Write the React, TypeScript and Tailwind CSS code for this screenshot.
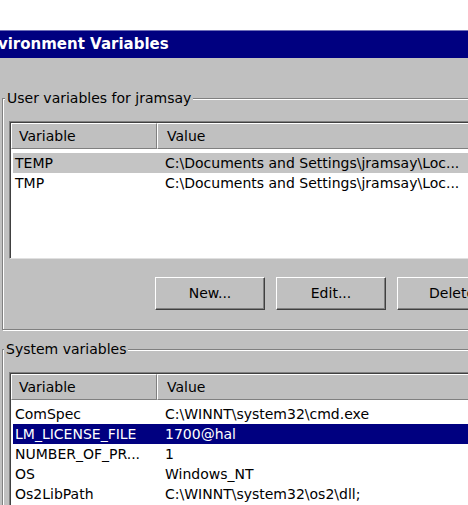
const userVars = [
  { name: "TEMP", value: "C:\\Documents and Settings\\jramsay\\Loc..." },
  { name: "TMP", value: "C:\\Documents and Settings\\jramsay\\Loc..." },
];

const systemVars = [
  { name: "ComSpec", value: "C:\\WINNT\\system32\\cmd.exe" },
  { name: "LM_LICENSE_FILE", value: "1700@hal" },
  { name: "NUMBER_OF_PR...", value: "1" },
  { name: "OS", value: "Windows_NT" },
  { name: "Os2LibPath", value: "C:\\WINNT\\system32\\os2\\dll;" },
];

type Row = { name: string; value: string };

const VarList = ({ rows, selected, active, height }: { rows: Row[]; selected: number; active: boolean; height: string }) => {
  return (
    <div className={"ml-[6px] w-[560px] bg-white border border-t-[#808080] border-l-[#808080] border-r-white border-b-[#e0e0e0] shadow-[inset_1px_1px_0_#404040] " + height}>
      <div className="flex h-[26px] mt-[1px] ml-[1px] bg-[#c0c0c0]">
        <div className="w-[146px] flex items-center pl-[7px] pt-[1px] border border-t-white border-l-white border-r-[#808080] border-b-[#808080]">
          Variable
        </div>
        <div className="flex-1 flex items-center pl-[9px] pt-[1px] border border-t-white border-l-white border-r-[#808080] border-b-[#808080]">
          Value
        </div>
      </div>
      <div className="pt-[4px]">
        {rows.map((r, i) => {
          const sel = i === selected;
          const cls = sel ? (active ? "bg-[#000080] text-white" : "bg-[#c4c4c4]") : "";
          return (
            <div key={r.name} className={"flex h-[20px] items-center ml-[3px] " + cls}>
              <div className="w-[152px] pl-[2px] whitespace-nowrap">{r.name}</div>
              <div className="whitespace-nowrap">{r.value}</div>
            </div>
          );
        })}
      </div>
    </div>
  );
};

const Button = ({ label }: { label: string }) => (
  <div className="w-[110px] h-[33px] flex items-center justify-center border border-t-white border-l-white border-r-[#404040] border-b-[#404040] shadow-[inset_-1px_-1px_0_#808080]">
    {label}
  </div>
);

const App = () => {
  return (
    <div
      className="w-[468px] h-[505px] overflow-hidden bg-white text-[14px] text-black"
      style={{ fontFamily: '"DejaVu Sans", Tahoma, sans-serif' }}
    >
      <div className="h-[30px]" />
      <div className="h-[28px] bg-[#000080] border-t border-[#7070b8] flex items-center overflow-hidden">
        <span className="-ml-[23px] text-white font-bold text-[15px] whitespace-nowrap">Environment Variables</span>
      </div>
      <div className="h-[447px] bg-[#c0c0c0] pt-[40px]">
        {/* user variables */}
        <div className="relative ml-[2px] w-[600px] border border-[#808080] shadow-[1px_1px_0_#fff,inset_1px_1px_0_#fff] pt-[22px] pb-[19px]">
          <span className="absolute -top-[9px] left-[2px] px-[2px] bg-[#c0c0c0] leading-[16px]">User variables for jramsay</span>
          <VarList rows={userVars} selected={0} active={false} height="h-[138px]" />
          <div className="flex gap-[11px] ml-[152px] mt-[18px]">
            <Button label="New..." />
            <Button label="Edit..." />
            <Button label="Delete" />
          </div>
        </div>
        {/* system variables */}
        <div className="relative ml-[2px] mt-[19px] w-[600px] border border-[#808080] shadow-[1px_1px_0_#fff,inset_1px_1px_0_#fff] pt-[22px] pb-[19px]">
          <span className="absolute -top-[9px] left-[1px] px-[2px] bg-[#c0c0c0] leading-[16px]">System variables</span>
          <VarList rows={systemVars} selected={1} active={true} height="h-[160px]" />
        </div>
      </div>
    </div>
  );
};

export default App;
